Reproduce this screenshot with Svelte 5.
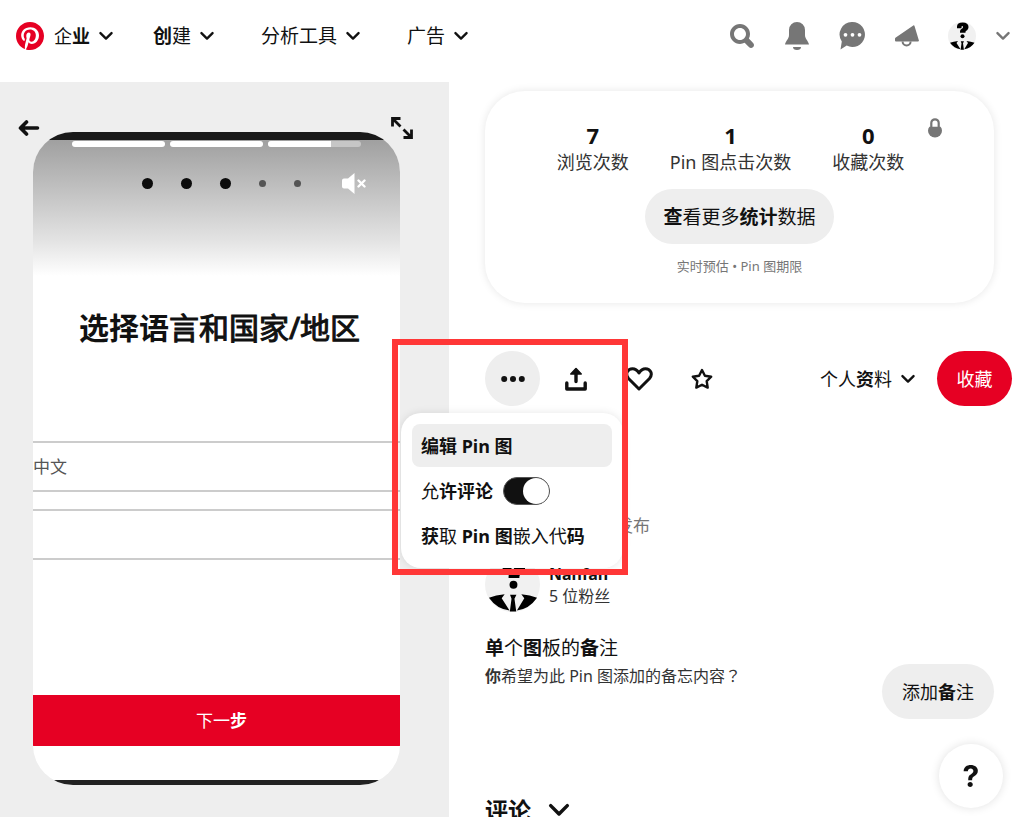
<script>
  const segments = [100, 100, 68];
  const dots = ['big', 'big', 'big', 'small', 'small'];
  let allowComments = $state(true);
</script>

{#snippet chevron(cls)}
  <svg class={cls} viewBox="0 0 24 16" fill="none" stroke="currentColor" stroke-linecap="round" stroke-linejoin="round" aria-hidden="true">
    <path d="M2.5 3 12 12.5 21.5 3" />
  </svg>
{/snippet}

{#snippet avatar(cls)}
  <svg class={cls} viewBox="0 0 56 56" aria-hidden="true">
    <circle cx="28" cy="28" r="28" fill="#f1f1f1" />
    <path d="M18 12.500V9c0-5 4-8 11.500-8S41 4 41 10c0 4-2 6-4.500 7.500-1.500 1-1.500 2-1.500 4H24c0-4.500.5-6 3-7.500 2-1.200 3-2.200 3-4 0-1.300-.6-2-1.500-2S27 8.700 27 10v2.500z" />
    <circle cx="29" cy="28.300" r="4" />
    <path d="M4 41.500q7-2.500 16-3.500l-3 4 8 12.500Q12 53 4 41.500zM53 41.500q-7-2.500-16-3.500l3 4-7.500 12.500Q45 53 53 41.500zM25.500 38.500h6.500l-2 4 1.800 13h-6.500l1.700-13z" />
  </svg>
{/snippet}

<div class="page">
  <header>
    <a class="logo" href="#home" aria-label="Pinterest">
      <svg viewBox="0 0 24 24"><path fill="#e60023" d="M0 12c0 5.123 3.211 9.497 7.730 11.218-.11-.937-.227-2.482.025-3.566.217-.932 1.401-5.938 1.401-5.938s-.357-.715-.357-1.774c0-1.660.962-2.900 2.161-2.900 1.020 0 1.512.765 1.512 1.682 0 1.025-.653 2.557-.99 3.978-.281 1.189.597 2.159 1.769 2.159 2.123 0 3.756-2.239 3.756-5.471 0-2.861-2.056-4.860-4.991-4.860-3.398 0-5.393 2.549-5.393 5.184 0 1.027.395 2.127.889 2.726a.36.36 0 0 1 .083.343c-.091.378-.293 1.189-.332 1.355-.053.218-.173.265-.4.159-1.492-.694-2.424-2.875-2.424-4.627 0-3.769 2.737-7.229 7.892-7.229 4.144 0 7.365 2.953 7.365 6.899 0 4.117-2.595 7.431-6.199 7.431-1.211 0-2.348-.63-2.738-1.373 0 0-.599 2.282-.744 2.840-.282 1.084-1.064 2.456-1.549 3.235C9.584 23.815 10.770 24 12 24c6.627 0 12-5.373 12-12S18.627 0 12 0 0 5.373 0 12" /></svg>
    </a>
    <button class="drop brand"><span>企<b>业</b></span>{@render chevron('chev')}</button>
    <nav>
      <button class="drop"><span><b>创</b>建</span>{@render chevron('chev')}</button>
      <button class="drop"><span>分析工具</span>{@render chevron('chev')}</button>
      <button class="drop"><span>广告</span>{@render chevron('chev')}</button>
    </nav>
    <div class="tools">
      <button aria-label="搜索">
        <svg viewBox="0 0 24 24" fill="currentColor"><path d="M10 16c-3.310 0-6-2.690-6-6s2.690-6 6-6 6 2.690 6 6-2.690 6-6 6m13.120 2.880-4.260-4.260C19.580 13.270 20 11.680 20 10c0-5.520-4.480-10-10-10S0 4.480 0 10s4.480 10 10 10c1.680 0 3.270-.41 4.660-1.140l4.260 4.260c1.160 1.160 3.040 1.160 4.200 0s1.160-3.080 0-4.240" /></svg>
      </button>
      <button aria-label="通知">
        <svg class="bell" viewBox="0 0 24 28" fill="currentColor"><path d="M12 0a8 8 0 0 0-8 8v5c0 4-3.200 5.500-4 9.500h24c-.8-4-4-5.500-4-9.500V8a8 8 0 0 0-8-8zM8 25h8a4 3 0 0 1-8 0z" /></svg>
      </button>
      <button aria-label="消息">
        <svg class="chat" viewBox="0 0 26 28" fill="currentColor"><path fill-rule="evenodd" d="M13.500 0a12.500 12.500 0 1 1-5.800 23.600L1.500 27.500l1.300-8A12.500 12.500 0 0 1 13.500 0zM6.500 10.900a1.900 1.900 0 1 0 0 3.800 1.900 1.900 0 0 0 0-3.800zm7 0a1.900 1.900 0 1 0 0 3.800 1.900 1.900 0 0 0 0-3.800zm7 0a1.900 1.900 0 1 0 0 3.800 1.900 1.900 0 0 0 0-3.800z" /></svg>
      </button>
      <button aria-label="广告动态">
        <svg viewBox="0 0 24 24" fill="currentColor"><path d="M18.300 1.500q.9-.5 1.200.5L23.900 16.500q.2 1.100-1 1.100H1q-1 0-1-1v-1.800q0-.8.8-1.300z" /><path d="M7.600 17.500a4 4 0 0 0 8 0" fill="none" stroke="currentColor" stroke-width="2" /></svg>
      </button>
      <button aria-label="个人主页">{@render avatar('face')}</button>
      <button class="more" aria-label="更多选项">{@render chevron('chev')}</button>
    </div>
  </header>

  <main>
    <section class="stage">
      <button class="over back" aria-label="返回">
        <svg viewBox="0 0 22 18" fill="none" stroke="currentColor" stroke-width="3.600" stroke-linecap="round" stroke-linejoin="round"><path d="M3 9h16.500M8.500 3 2.500 9l6 6" /></svg>
      </button>
      <button class="over expand" aria-label="全屏">
        <svg viewBox="0 0 22 22" fill="none" stroke="currentColor" stroke-width="2.800"><path d="M9.500 1.500h-8v8M2 2l7.500 7.500M20.500 12.500v8h-8M20 20l-7.500-7.500" /></svg>
      </button>
      <article class="phone">
        <div class="edge top"></div>
        <div class="shade">
          <div class="progress">
            {#each segments as fill}
              <span><i style="width: {fill}%"></i></span>
            {/each}
          </div>
          <div class="dots">
            {#each dots as size}<span class={size}></span>{/each}
            <button class="mute" aria-label="取消静音">
              <svg viewBox="0 0 24 21" fill="#fff"><path d="M12.500 0v21L6 15.500H2q-2 0-2-2v-6q0-2 2-2h4z" /><path d="m16.500 7.500 6 6m0-6-6 6" stroke="#fff" stroke-width="2.400" stroke-linecap="round" /></svg>
            </button>
          </div>
        </div>
        <h1><b>选择语</b><span>言和国家/地区</span></h1>
        <div class="field">中文</div>
        <div class="field"></div>
        <button class="next">下一<b>步</b></button>
        <div class="edge"></div>
      </article>
    </section>

    <section class="details">
      <div class="card">
        <svg class="lock" viewBox="0 0 14 20"><path d="M3.300 10V5a3.700 3.700 0 0 1 7.400 0v5" fill="none" stroke="#767676" stroke-width="2.200" /><path d="M1.500 8.800h11q1.500 1.500 1.500 4a7 6.800 0 0 1-14 0q0-2.500 1.500-4z" fill="#767676" /></svg>
        <dl>
          <div><dd>7</dd><dt>浏览次数</dt></div>
          <div><dd>1</dd><dt>Pin 图点击次数</dt></div>
          <div><dd>0</dd><dt>收藏次数</dt></div>
        </dl>
        <button class="pill stats"><b>查</b>看更多<b>统计</b>数据</button>
        <p>实时预估 • Pin 图期限</p>
      </div>

      <div class="actions">
        <div class="anchor">
          <button class="round on" aria-label="更多" aria-expanded="true">
            <svg viewBox="0 0 24 6" fill="currentColor"><circle cx="3.200" cy="3" r="3" /><circle cx="12" cy="3" r="3" /><circle cx="20.800" cy="3" r="3" /></svg>
          </button>
          <div class="menu">
            <button class="item active"><b>编辑 Pin 图</b></button>
            <label class="item">
              <span>允<b>许评论</b></span>
              <input type="checkbox" role="switch" bind:checked={allowComments} />
            </label>
            <button class="item"><span><b>获</b>取 <b>Pin 图</b>嵌入代<b>码</b></span></button>
          </div>
          <div class="frame"></div>
        </div>
        <button class="round" aria-label="分享">
          <svg viewBox="0 0 22 24" fill="none" stroke="currentColor" stroke-width="3.400" stroke-linecap="round" stroke-linejoin="round"><path d="M1.800 16v6h18.400v-6M11 14.500V4" /><path d="M11 1.500 5.800 7h10.400z" stroke-width="1.600" fill="currentColor" /></svg>
        </button>
        <button class="round" aria-label="喜欢">
          <svg class="heart" viewBox="0 0 28 24" fill="none" stroke="currentColor" stroke-width="3" stroke-linejoin="round"><path d="M14 22 3.500 11.500C-.5 6.500 3 1.700 7.500 1.700c3 0 5 1.800 6.500 4.300 1.500-2.500 3.500-4.300 6.500-4.300 4.500 0 8 4.800 4 9.800z" /></svg>
        </button>
        <button class="round" aria-label="加星标">
          <svg class="star" viewBox="0 0 22 22" fill="none" stroke="currentColor" stroke-width="2.400" stroke-linejoin="round"><path d="m11 2 2.900 5.700 6.300 1-4.500 4.500 1 6.400L11 16.700l-5.700 2.900 1-6.400L1.800 8.700l6.300-1z" /></svg>
        </button>
        <button class="drop board"><span>个人<b>资</b>料</span>{@render chevron('chev')}</button>
        <button class="save">收藏</button>
      </div>

      <p class="published">发布</p>

      <div class="author">
        {@render avatar('portrait')}
        <div>
          <strong>Nanfan</strong>
          <span>5 位粉丝</span>
        </div>
      </div>

      <div class="note">
        <div>
          <h2><b>单</b>个<b>图</b>板的<b>备</b>注</h2>
          <p><b>你</b>希望为此 Pin 图添加的备忘内容<span class="mark">？</span></p>
        </div>
        <button class="pill">添加<b>备</b>注</button>
      </div>

      <button class="comments"><b>评论</b>{@render chevron('chev')}</button>
    </section>
  </main>

  <button class="help" aria-label="帮助">?</button>
</div>

<style>
  :global(body) {
    margin: 0;
    background: #fff;
  }
  .page {
    display: flex;
    flex-direction: column;
    height: 100vh;
    overflow: hidden;
    color: #111;
    font-family: 'Noto Sans', 'Noto Sans CJK SC', sans-serif;
    font-size: 18px;
    line-height: 24px;
  }
  .page * {
    box-sizing: border-box;
  }
  button {
    display: flex;
    align-items: center;
    justify-content: center;
    padding: 0;
    border: 0;
    background: none;
    color: inherit;
    font: inherit;
    white-space: pre;
    cursor: pointer;
  }
  svg {
    display: block;
    flex: none;
  }
  h1,
  h2,
  p,
  dl,
  dd {
    margin: 0;
    font-weight: 400;
  }

  header {
    display: flex;
    align-items: center;
    flex: none;
    height: 82px;
    padding: 0 7px 10px 16px;
  }
  .logo svg {
    width: 28px;
    height: 28px;
  }
  .drop {
    gap: 9px;
    font-size: 19px;
  }
  .brand {
    margin: 0 40px 0 10px;
    font-size: 18px;
  }
  .chev {
    width: 14px;
    height: 10px;
    stroke-width: 4;
  }
  nav {
    display: flex;
    gap: 47px;
  }
  .tools {
    display: flex;
    margin-left: auto;
    color: #767676;
  }
  .tools button {
    width: 55px;
    height: 48px;
  }
  .tools svg {
    width: 24px;
    height: 24px;
  }
  .tools .bell {
    height: 28px;
  }
  .tools .chat {
    width: 26px;
    height: 28px;
  }
  .tools .face {
    width: 28px;
    height: 28px;
    color: #000;
  }
  .tools .more {
    width: 28px;
  }
  .tools .chev {
    width: 14px;
    height: 10px;
  }

  main {
    display: grid;
    grid-template-columns: minmax(0, 449fr) minmax(0, 575fr);
    grid-template-rows: minmax(0, 1fr);
    flex: 1;
    min-height: 0;
  }
  .stage {
    position: relative;
    padding: 50px 49px 32px 33px;
    background: #eee;
  }
  .over {
    position: absolute;
  }
  .back {
    top: 37px;
    left: 18px;
  }
  .back svg {
    width: 22px;
    height: 18px;
  }
  .expand {
    top: 35px;
    right: 36px;
  }
  .expand svg {
    width: 22px;
    height: 22px;
  }
  .phone {
    display: flex;
    flex-direction: column;
    height: 100%;
    overflow: hidden;
    border-radius: 40px;
    background: #fff;
  }
  .edge {
    flex: none;
    height: 5px;
    background: #222;
  }
  .edge.top {
    height: 8px;
    background: #191919;
  }
  .shade {
    flex: none;
    height: 136px;
    padding: 1px 39px 0;
    background: linear-gradient(#a0a0a0, #c4c4c4 40%, #e4e4e4 75%, #fff);
  }
  .progress {
    display: flex;
    gap: 5px;
  }
  .progress span {
    flex: 1;
    height: 6px;
    overflow: hidden;
    border-radius: 3px;
    background: #c6c6c6;
  }
  .progress i {
    display: block;
    height: 100%;
    background: #fff;
  }
  .dots {
    display: flex;
    align-items: center;
    gap: 28px;
    height: 22px;
    margin-top: 25px;
    padding-left: 70px;
  }
  .dots span {
    flex: none;
    border-radius: 50%;
  }
  .big {
    width: 11px;
    height: 11px;
    background: #0c0c0c;
  }
  .small {
    width: 7px;
    height: 7px;
    background: #555;
  }
  .mute {
    margin-left: 13px;
  }
  .mute svg {
    width: 24px;
    height: 21px;
  }
  h1 {
    height: 165px;
    padding: 32px 0 0 6px;
    font-size: 30px;
    line-height: 40px;
    text-align: center;
    white-space: nowrap;
  }
  h1 span {
    -webkit-text-stroke: 1px currentColor;
  }
  .field {
    flex: none;
    height: 51px;
    margin-bottom: 17px;
    border: solid #ccc;
    border-width: 2px 0;
    color: #555;
    font-size: 17px;
    line-height: 47px;
  }
  .next {
    flex: none;
    height: 51px;
    margin: auto 0 34px;
    padding-left: 10px;
    background: #e60023;
    color: #fff;
    font-size: 17px;
  }

  .details {
    padding: 9px 12px 0 36px;
  }
  .card {
    position: relative;
    display: flex;
    flex-direction: column;
    align-items: center;
    height: 212px;
    margin-right: 18px;
    padding-top: 32px;
    border-radius: 40px;
    box-shadow: 0 0 8px rgba(0, 0, 0, 0.1);
  }
  .lock {
    position: absolute;
    top: 27px;
    right: 52px;
    width: 14px;
    height: 20px;
  }
  dl {
    display: flex;
    gap: 41px;
    padding-right: 18px;
    text-align: center;
  }
  dl div {
    display: flex;
    flex-direction: column;
    gap: 3px;
  }
  dd {
    font-size: 22px;
    font-weight: 700;
  }
  dt {
    color: #333;
  }
  .pill {
    height: 55px;
    padding: 0 20px;
    border-radius: 28px;
    background: #eee;
  }
  .stats {
    margin: 15px 0 10px;
    padding: 0 18px;
    font-size: 19px;
  }
  .card p {
    color: #767676;
    font-size: 13px;
  }

  .actions {
    display: flex;
    align-items: center;
    gap: 8px;
    margin-top: 48px;
  }
  .anchor {
    position: relative;
  }
  .round {
    width: 55px;
    height: 55px;
    border-radius: 50%;
  }
  .round svg {
    width: 24px;
    height: 24px;
  }
  .round.on {
    background: #eee;
  }
  .round .heart {
    width: 28px;
  }
  .round .star {
    width: 22px;
    height: 22px;
  }
  .board {
    margin: 0 14px 0 auto;
    font-size: 18px;
  }
  .save {
    width: 75px;
    height: 55px;
    border-radius: 28px;
    background: #e60023;
    color: #fff;
  }
  .menu {
    position: absolute;
    z-index: 2;
    top: 62px;
    left: -84px;
    display: flex;
    flex-direction: column;
    gap: 2px;
    width: 222px;
    padding: 11px;
    border-radius: 20px;
    background: #fff;
    box-shadow: 0 0 8px rgba(0, 0, 0, 0.1);
  }
  .item {
    display: flex;
    align-items: center;
    justify-content: flex-start;
    gap: 10px;
    height: 43px;
    padding: 0 9px;
    border-radius: 8px;
  }
  .item.active {
    background: #eee;
  }
  .item input {
    display: flex;
    align-items: center;
    width: 47px;
    height: 28px;
    margin: 0;
    appearance: none;
    border: 1px solid #555;
    border-radius: 14px;
    background: #fff;
  }
  .item input:checked {
    justify-content: flex-end;
    background: #111;
  }
  .item input::before {
    content: '';
    width: 26px;
    height: 26px;
    border-radius: 50%;
    background: #fff;
  }
  .frame {
    position: absolute;
    z-index: 3;
    top: -12px;
    left: -93px;
    width: 236px;
    height: 236px;
    border: 6px solid #ff3737;
    pointer-events: none;
  }

  .published {
    margin-top: 108px;
    padding-left: 131px;
    color: #767676;
    font-size: 17px;
  }
  .author {
    display: flex;
    align-items: center;
    gap: 9px;
    margin-top: 19px;
  }
  .portrait {
    width: 55px;
    height: 55px;
  }
  .author div {
    display: flex;
    flex-direction: column;
    font-size: 16px;
    line-height: 22px;
  }
  .author span {
    color: #333;
  }
  .note {
    display: flex;
    align-items: flex-start;
    justify-content: space-between;
    margin: 24px 18px 0 0;
  }
  h2 {
    font-size: 19px;
    line-height: 24px;
  }
  .note p {
    margin-top: 4px;
    color: #333;
    font-size: 16px;
  }
  .mark {
    font-family: 'Noto Sans CJK TC', sans-serif;
    line-height: 16px;
  }
  .note .pill {
    margin-top: 28px;
  }
  .comments {
    gap: 17px;
    margin-top: 75px;
    font-size: 23px;
    line-height: 32px;
  }
  .comments .chev {
    width: 22px;
    height: 14px;
  }
  .help {
    position: fixed;
    right: 21px;
    bottom: 9px;
    width: 64px;
    height: 64px;
    border-radius: 50%;
    background: #fff;
    box-shadow: 0 0 10px rgba(0, 0, 0, 0.12);
    font-family: Inter, sans-serif;
    font-size: 30px;
    font-weight: 700;
  }
</style>
